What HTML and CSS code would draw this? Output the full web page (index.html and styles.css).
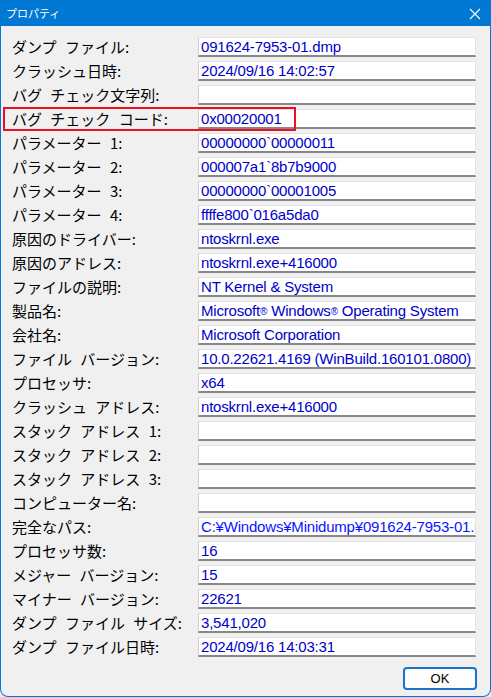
FILE: index.html
```html
<!DOCTYPE html>
<html lang="ja">
<head>
<meta charset="utf-8">
<title>プロパティ</title>
<link rel="stylesheet" href="styles.css">
</head>
<body>
<div class="window">
  <div class="titlebar">
    <span class="title">プロパティ</span>
    <svg class="close" width="12" height="12" viewBox="0 0 12 12"><path d="M1 1 L11 11 M11 1 L1 11" stroke="#fff" stroke-width="1.1" fill="none"/></svg>
  </div>
  <div class="content">
    <div class="grid">
      <div class="label">ダンプ ファイル:</div><div class="field">091624-7953-01.dmp</div>
      <div class="label">クラッシュ日時:</div><div class="field">2024/09/16 14:02:57</div>
      <div class="label">バグ チェック文字列:</div><div class="field"></div>
      <div class="label">バグ チェック コード:</div><div class="field">0x00020001</div>
      <div class="label">パラメーター 1:</div><div class="field">00000000`00000011</div>
      <div class="label">パラメーター 2:</div><div class="field">000007a1`8b7b9000</div>
      <div class="label">パラメーター 3:</div><div class="field">00000000`00001005</div>
      <div class="label">パラメーター 4:</div><div class="field">ffffe800`016a5da0</div>
      <div class="label">原因のドライバー:</div><div class="field">ntoskrnl.exe</div>
      <div class="label">原因のアドレス:</div><div class="field">ntoskrnl.exe+416000</div>
      <div class="label">ファイルの説明:</div><div class="field">NT Kernel &amp; System</div>
      <div class="label">製品名:</div><div class="field">Microsoft<span class="reg">®</span> Windows<span class="reg">®</span> Operating System</div>
      <div class="label">会社名:</div><div class="field">Microsoft Corporation</div>
      <div class="label">ファイル バージョン:</div><div class="field">10.0.22621.4169 (WinBuild.160101.0800)</div>
      <div class="label">プロセッサ:</div><div class="field">x64</div>
      <div class="label">クラッシュ アドレス:</div><div class="field">ntoskrnl.exe+416000</div>
      <div class="label">スタック アドレス 1:</div><div class="field"></div>
      <div class="label">スタック アドレス 2:</div><div class="field"></div>
      <div class="label">スタック アドレス 3:</div><div class="field"></div>
      <div class="label">コンピューター名:</div><div class="field"></div>
      <div class="label">完全なパス:</div><div class="field field-path">C:¥Windows¥Minidump¥091624-7953-01.dmp</div>
      <div class="label">プロセッサ数:</div><div class="field">16</div>
      <div class="label">メジャー バージョン:</div><div class="field">15</div>
      <div class="label">マイナー バージョン:</div><div class="field">22621</div>
      <div class="label">ダンプ ファイル サイズ:</div><div class="field">3,541,020</div>
      <div class="label">ダンプ ファイル日時:</div><div class="field">2024/09/16 14:03:31</div>
    </div>
    <div class="footer">
      <button class="ok">OK</button>
    </div>
  </div>
  <div class="highlight"></div>
</div>
</body>
</html>
```

FILE: styles.css
```css
html, body {
  margin: 0;
  padding: 0;
  background: #f0f0f0;
}

.window {
  position: relative;
  box-sizing: border-box;
  width: 491px;
  height: 697px;
  border: 1px solid #0078d4;
  border-top: none;
  border-radius: 0 0 8px 8px;
  background: #f0f0f0;
  overflow: hidden;
}

.titlebar {
  height: 26px;
  background: #0078d4;
  display: flex;
  align-items: center;
  justify-content: space-between;
  padding: 0 9px 0 5px;
  box-sizing: border-box;
}

.title {
  color: #fff;
  font-family: "Noto Sans CJK JP", sans-serif;
  font-size: 11px;
  line-height: 26px;
}

.close {
  display: block;
  margin-top: 1px;
}

.content {
  padding: 11px 14px 0 11px;
}

.grid {
  display: grid;
  grid-template-columns: 186px 278px;
  grid-auto-rows: 20px;
  row-gap: 4px;
}

.label {
  font-family: "Noto Sans CJK JP", sans-serif;
  font-size: 15px;
  line-height: 20px;
  word-spacing: 5px;
  color: #000;
  white-space: nowrap;
}

.field {
  box-sizing: border-box;
  background: #fff;
  border: 1px solid #e3e3e3;
  border-left-color: #d0d0d0;
  border-bottom: 2px solid #878787;
  padding: 0 0 0 2px;
  font-family: "Liberation Sans", Arial, sans-serif;
  font-size: 15px;
  letter-spacing: -0.2px;
  line-height: 18px;
  color: #0000c8;
  white-space: nowrap;
  overflow: hidden;
}

.field-path {
  color: #0a14ff;
}

.reg {
  font-size: 10px;
  vertical-align: 1px;
}

.footer {
  display: flex;
  justify-content: flex-end;
  margin-top: 10px;
  margin-right: -1px;
}

.ok {
  width: 74px;
  height: 23px;
  box-sizing: border-box;
  background: #fdfdfd;
  border: 2px solid #1a73c8;
  border-radius: 4px;
  font-family: "Liberation Sans", Arial, sans-serif;
  font-size: 13px;
  color: #000;
  padding: 0;
}

.highlight {
  position: absolute;
  left: 2px;
  top: 107px;
  width: 293px;
  height: 24px;
  box-sizing: border-box;
  border: 2px solid #e81123;
}
```
